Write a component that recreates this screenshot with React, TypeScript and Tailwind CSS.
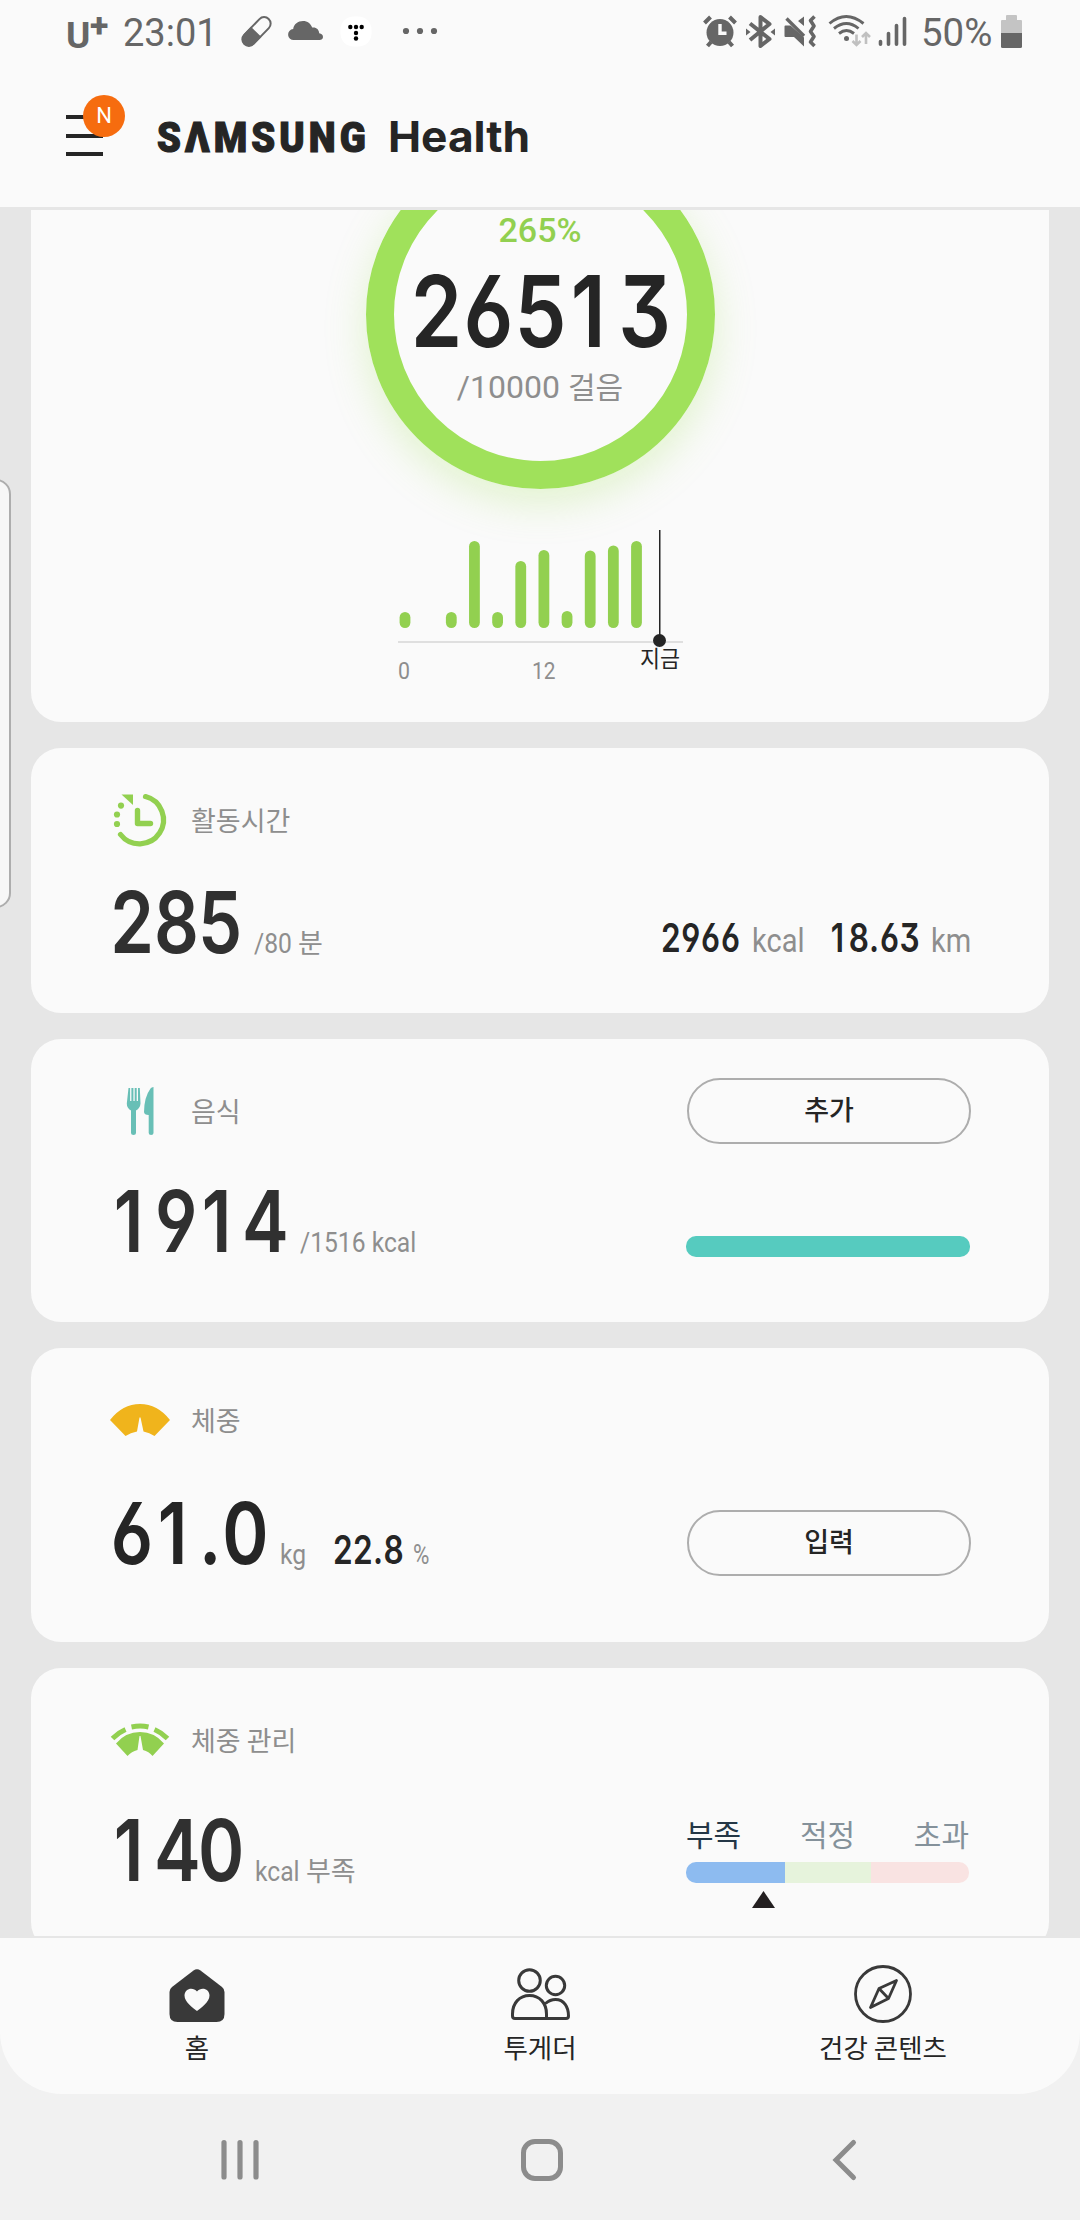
import React from "react";

const KR = "font-['Noto_Sans_CJK_KR',sans-serif]";
const RO = "font-['Roboto','Noto_Sans_CJK_KR',sans-serif]";
const NUM = "font-['Inter',sans-serif] [font-feature-settings:'cv03','cv04','cv09']";

/* Horizontally condensed run of text in a box of fixed width. */
function Cond({ box, text, children }: { box: string; text: string; children: React.ReactNode }) {
  return (
    <span className={`block shrink-0 whitespace-nowrap ${box}`}>
      <span className={`inline-block origin-left leading-none ${text}`}>{children}</span>
    </span>
  );
}

/* Number set in equal-width digit cells; the figure 1 sits slightly left in its cell. */
function Digits({ value }: { value: string }) {
  return (
    <>
      {value.split("").map((c, i) => (
        <span
          key={i}
          className={
            c === "."
              ? "inline-block w-[0.345em] text-center"
              : c === "1"
                ? "inline-block w-[0.628em] pr-[0.1em] text-center"
                : "inline-block w-[0.628em] text-center"
          }
        >
          {c}
        </span>
      ))}
    </>
  );
}

function StatusBar() {
  return (
    <div className="flex h-[52px] items-start pt-3 text-[#666666]">
      <span className={`relative ml-[66px] block h-10 w-[49px] leading-none ${RO}`}>
        <span className="block pt-[5px] text-[37px] leading-none font-bold">U</span>
        <span className="absolute -top-[4px] left-[24px] text-[34px] leading-none font-extrabold">+</span>
      </span>
      <Cond box="ml-[8px] w-[113px] pt-[2px]" text={`${RO} text-[39px] scale-x-[0.975]`}>23:01</Cond>
      <svg className="h-10 w-10" viewBox="236 12 40 40" fill="none">
        <g transform="rotate(-46 256.5 31.5)">
          <rect x="239" y="25" width="35" height="13" rx="6.5" stroke="currentColor" strokeWidth="2" />
          <path d="M256 24.200h-10a7.300 7.300 0 0 0 0 14.600h10z" fill="currentColor" />
        </g>
      </svg>
      <svg className="ml-[8px] h-10 w-10" viewBox="284 12 40 40" fill="currentColor">
        <path d="M294 40a5.500 5.500 0 0 1-.8-11c.6-5 4.800-8 9.800-8 4.500 0 7.800 2.600 9.200 6.600 4-.6 6.800 2 7 5.600 2.400.4 3.800 1.600 3.800 3.800 0 2-1.500 3-3.500 3z" />
      </svg>
      <svg className="ml-[12px] h-10 w-10" viewBox="336 12 40 40">
        <rect x="340.500" y="16.500" width="31" height="30" rx="13" fill="#fff" />
        <g fill="#000">
          <circle cx="350.300" cy="27" r="2.200" />
          <circle cx="356" cy="27" r="2.200" />
          <circle cx="361.700" cy="27" r="2.200" />
          <circle cx="356" cy="33" r="2.200" />
          <circle cx="356" cy="38.500" r="2.200" />
        </g>
      </svg>
      <svg className="ml-[24px] h-10 w-10" viewBox="400 12 40 40" fill="currentColor">
        <circle cx="406" cy="31" r="3.100" />
        <circle cx="420" cy="31" r="3.100" />
        <circle cx="434" cy="31" r="3.100" />
      </svg>
      <svg className="ml-[260px] h-10 w-10" viewBox="700 12 40 40" fill="none" stroke="currentColor">
        <circle cx="720" cy="32.500" r="13.500" fill="currentColor" stroke="none" />
        <path d="M720 24v9.200h6.500" stroke="#fafafa" strokeWidth="3.400" />
        <path d="M704.500 23l6-6M735.500 23l-6-6" strokeWidth="4" />
        <path d="M711 42l-3.500 4M729 42l3.500 4" strokeWidth="4" />
      </svg>
      <svg className="ml-[2px] h-10 w-[36px]" viewBox="742 12 36 40" fill="none" stroke="currentColor">
        <path d="M750 23.500l19.500 15.500-9 7V17l9 7L750 40" strokeWidth="4" strokeLinejoin="round" />
        <path d="M746 28.500v7l4.500-3.500zM775 28.500v7l-4.500-3.500z" fill="currentColor" stroke="none" />
      </svg>
      <svg className="ml-[4px] h-10 w-10" viewBox="782 12 40 40" fill="none" stroke="currentColor">
        <path d="M785.500 25.500h5l13.500 12V46.500l-10-9.500h-8.500q-1 0-1-1V26.500q0-1 1-1zM804 16.500v9.500l-6-5z" fill="currentColor" stroke="none" />
        <path d="M786.500 18.500L804 36" strokeWidth="3.400" />
        <path d="M814.500 16.500l-4 4 3.500 5.500-3.500 5.500 3.500 5-3.500 5.500 4 4" strokeWidth="3.600" strokeLinejoin="round" />
      </svg>
      <svg className="ml-[5px] h-10 w-[45px]" viewBox="827 12 45 40" fill="none" stroke="currentColor">
        <path d="M829.500 23.500q16.500-14 34 0M834 28.500q12.500-10 24.500 0M839 33.500q7.500-6 15 0" strokeWidth="2.900" />
        <circle cx="846.500" cy="38.500" r="2.500" fill="currentColor" stroke="none" />
        <path d="M856.500 34.500v9.500M852.500 41l4 4 4-4M866 44v-10M862 37l4-4 4 4" stroke="#c0c0c0" strokeWidth="2.600" />
      </svg>
      <svg className="ml-[4px] h-10 w-[34px]" viewBox="876 12 34 40" fill="none" stroke="currentColor" strokeWidth="3.600" strokeLinecap="round">
        <path d="M880.500 41.500v2.700M888.500 33.500v10.700M896.500 25.500v18.700M904.500 18.500v25.700" />
      </svg>
      <Cond box="ml-[11px] w-[76px] pt-[2px]" text={`${RO} text-[39px] scale-x-[0.985]`}>50%</Cond>
      <svg className="h-10 w-[30px]" viewBox="997 12 30 40">
        <path d="M1006 16q0-1 1-1h9q1 0 1 1v4h4q1 0 1 1v12h-21V21q0-1 1-1h4z" fill="#c4c4c4" />
        <path d="M1001 33h21v13.500q0 1.500-1.500 1.500h-18q-1.500 0-1.500-1.500z" fill="currentColor" />
      </svg>
    </div>
  );
}

function Header() {
  return (
    <header className="h-[210px] border-b-[3px] border-[#e6e6e6] bg-[#fafafa]">
      <StatusBar />
      <div className="flex h-[120px] items-start pt-[63px] text-[#252525]">
        <div className="relative ml-[66px] w-[37px]">
          <div className="flex flex-col gap-[14.500px]">
            <span className="h-1 w-[37px] bg-[#252525]" />
            <span className="h-1 w-[37px] bg-[#252525]" />
            <span className="h-1 w-[37px] bg-[#252525]" />
          </div>
          <span className={`absolute -top-[20.500px] left-[17px] flex size-[42px] items-center justify-center rounded-full bg-[#f66c0f] text-[22px] leading-none text-white ${RO}`}>
            N
          </span>
        </div>
        <div className="flex items-baseline">
          <Cond
            box="ml-[54px] w-[231px]"
            text="font-['Roboto',sans-serif] text-[42px] font-black tracking-[4.500px] scale-x-[0.91] [-webkit-text-stroke:1.2px_#252525]"
          >
            <span aria-label="SAMSUNG">SΛMSUNG</span>
          </Cond>
          <Cond box="w-[155px]" text="font-['Inter',sans-serif] text-[43px] font-bold scale-x-[1.03]">
            Health
          </Cond>
        </div>
      </div>
    </header>
  );
}

/* [slot, height] of each two-hour column. */
const BARS: [number, number][] = [
  [0, 16], [2, 16], [3, 87], [4, 16], [5, 67], [6, 78], [7, 17], [8, 77.5], [9, 82.5], [10, 87],
];

function StepsCard() {
  return (
    <section className="flex h-[512px] shrink-0 flex-col items-center overflow-hidden rounded-b-[30px] bg-[#fafafa]">
      <div className="-mt-[70px] flex size-[349px] shrink-0 flex-col items-center rounded-full border-[28px] border-[#a0e15b] pt-[45px] leading-none shadow-[0_14px_40px_rgba(160,225,91,0.28)]">
        <span className={`text-[34px] font-medium leading-none text-[#92d050] ${RO}`}>265%</span>
        <span className={`mt-[15px] inline-block scale-x-[0.835] text-[99px] leading-none font-semibold whitespace-nowrap text-[#252525] ${NUM}`}>
          <Digits value="26513" />
        </span>
        <span className={`mt-[10px] whitespace-nowrap text-[32px] leading-none text-[#8e8e8e] ${RO}`}>
          /10000 <span className="text-[30px]">걸음</span>
        </span>
      </div>
      <svg className="mt-[36px] h-[165px] w-[300px] shrink-0" viewBox="390 525 300 165">
        <rect x="398" y="641" width="285" height="2" fill="#dfdfdf" />
        {BARS.map(([slot, h]) => (
          <rect key={slot} x={399.6 + slot * 23.15} y={628 - h} width="10.800" height={h} rx="5.400" fill="#92d050" />
        ))}
        <rect x="659" y="530" width="1.500" height="105" fill="#252525" />
        <circle cx="659.500" cy="640.500" r="6.500" fill="#252525" />
        <g fontFamily="Roboto" fontSize="24" fill="#8e8e8e">
          <text x="398" y="679" textLength="12" lengthAdjust="spacingAndGlyphs">0</text>
          <text x="532" y="679" textLength="23.500" lengthAdjust="spacingAndGlyphs">12</text>
        </g>
        <text x="640" y="666.500" fontFamily="Noto Sans CJK KR" fontSize="23" fill="#252525" textLength="40" lengthAdjust="spacingAndGlyphs">
          지금
        </text>
      </svg>
    </section>
  );
}

function Card({
  height, icon, label, children, right,
}: {
  height: string; icon: React.ReactNode; label: string; children: React.ReactNode; right: React.ReactNode;
}) {
  return (
    <section className={`flex shrink-0 justify-between rounded-[30px] bg-[#fafafa] pl-[79px] ${height}`}>
      <div className="flex flex-col pt-[42px]">
        <div className="flex h-[60px] items-center gap-[21px]">
          <svg className="size-[60px]" viewBox="0 0 60 60">{icon}</svg>
          <span className={`-mt-[2px] text-[27px] leading-none text-[#8e8e8e] ${KR}`}>{label}</span>
        </div>
        {children}
      </div>
      {right}
    </section>
  );
}

const big = `${NUM} text-[85px] font-semibold scale-x-[0.825]`;
const mid = `${NUM} text-[39px] font-semibold scale-x-[0.81] text-[#252525]`;
const unit = `${RO} text-[28px] text-[#8e8e8e] scale-x-[0.88]`;
const unitKr = `${KR} text-[27px] text-[#8e8e8e]`;

function ActionButton({ children }: { children: React.ReactNode }) {
  return (
    <button className={`flex h-[66px] w-[284px] items-center justify-center rounded-full border-2 border-[#adadad] pb-[5px] text-[27px] leading-none font-medium text-[#252525] ${KR}`}>
      {children}
    </button>
  );
}

function ActivityCard() {
  return (
    <Card
      height="h-[265px]"
      label="활동시간"
      icon={
        <g fill="none" stroke="#92d050">
          <path d="M35.500 6.600A24 24 0 1 1 10.500 44.500" strokeWidth="5.200" strokeLinecap="round" />
          <path d="M27.500 20.500v13h13" strokeWidth="5.400" strokeLinecap="round" strokeLinejoin="round" />
          <path d="M11.500 4.500h11.500v10.500z" fill="#92d050" stroke="none" />
          <g fill="#92d050" stroke="none">
            <circle cx="11" cy="15.600" r="3.100" />
            <circle cx="7" cy="24.500" r="3.100" />
            <circle cx="7" cy="34" r="3.100" />
          </g>
        </g>
      }
      right={
        <div className="mr-[72px] flex items-baseline pt-[170px]">
          <Cond box="w-[91px]" text={mid}><Digits value="2966" /></Cond>
          <Cond box="w-[77px]" text={`${RO} text-[33px] text-[#8e8e8e] scale-x-[0.88]`}>kcal</Cond>
          <Cond box="w-[102px]" text={mid}><Digits value="18.63" /></Cond>
          <Cond box="w-[46px]" text={`${RO} text-[33px] text-[#8e8e8e] scale-x-[0.88]`}>km</Cond>
        </div>
      }
    >
      <div className="mt-[30px] flex items-baseline text-[#303030]">
        <Cond box="w-[144px]" text={big}><Digits value="285" /></Cond>
        <Cond box="w-[44px]" text={unit}>/80</Cond>
        <Cond box="w-[40px]" text={unitKr}>분</Cond>
      </div>
    </Card>
  );
}

function FoodCard() {
  return (
    <Card
      height="h-[283px]"
      label="음식"
      icon={
        <g fill="#68bfb6">
          <path d="M18.500 7h1.600v13h1.300V7h2v13h1.300V7h2v13h1.300V7h1.800l.7 15.500q-.3 4.500-4.500 7v22.500q0 2-2.500 2t-2.500-2V29.500q-4.200-2.500-4.200-7z" />
          <path d="M43.500 6v46q0 2-2.400 2t-2.400-2V34q-4.500 0-4.700-3 .2-15 6.500-23.500 1-1.500 3-1.500z" />
        </g>
      }
      right={
        <div className="mr-[78px] pt-[39px]">
          <ActionButton>추가</ActionButton>
          <div className="mt-[92px] -ml-px h-[21px] w-[284px] rounded-[10px] bg-[#56cbbf]" />
        </div>
      }
    >
      <div className="mt-[38px] flex items-baseline text-[#303030]">
        <Cond box="w-[190px]" text={big}><Digits value="1914" /></Cond>
        <Cond box="w-[130px]" text={unit}>/1516 kcal</Cond>
      </div>
    </Card>
  );
}

function WeightCard() {
  return (
    <Card
      height="h-[294px]"
      label="체중"
      icon={
        <path d="M0 30Q12.500 14 30 14T60 30L44.500 46q-5-3.500-11-4.500L30.500 27.500h-1L27 41.500q-6.500 1-11.500 4.500z" fill="#f0b41c" />
      }
      right={
        <div className="mr-[78px] pt-[162px]">
          <ActionButton>입력</ActionButton>
        </div>
      }
    >
      <div className="mt-[41px] flex items-baseline text-[#252525]">
        <Cond box="w-[170px]" text={big}><Digits value="61.0" /></Cond>
        <Cond box="w-[53px]" text={unit}>kg</Cond>
        <Cond box="w-[80px]" text={mid}><Digits value="22.8" /></Cond>
        <Cond box="w-[30px]" text={`${RO} text-[28px] text-[#8e8e8e] scale-x-[0.8]`}>%</Cond>
      </div>
    </Card>
  );
}

function ManageCard() {
  return (
    <Card
      height="h-[284px]"
      label="체중 관리"
      icon={
        <g>
          <path d="M6 33.500Q15.500 22 30 22T54 33.500L42.500 46q-3.500-4.500-9.500-6L30.500 26h-1L27.500 40q-6 1.500-10 6z" fill="#92d050" />
          <path d="M2.500 28.500Q8.500 22.500 15.500 19.500M21.500 17q9-1.800 17 0M44.500 19.500Q51.500 22.500 57.500 28.500" fill="none" stroke="#92d050" strokeWidth="5" />
        </g>
      }
      right={
        <div className="mr-20 w-[283px] pt-[150px]">
          <div className={`flex justify-between text-[30px] leading-none text-[#84919a] ${KR}`}>
            <span className="text-[#243746]">부족</span>
            <span>적정</span>
            <span>초과</span>
          </div>
          <div className="mt-[14px] flex h-[21px] overflow-hidden rounded-[10px]">
            <span className="w-[98.500px] bg-[#8dbbf0]" />
            <span className="w-[86.500px] bg-[#e6f3dc]" />
            <span className="flex-1 bg-[#f9e3e2]" />
          </div>
          <svg className="mt-2 ml-[66px] h-[17px] w-[23px]" viewBox="0 0 23 17">
            <path d="M11.500 0L23 17H0z" fill="#231f20" />
          </svg>
        </div>
      }
    >
      <div className="mt-[38px] flex items-baseline text-[#303030]">
        <Cond box="w-[145px]" text={big}><Digits value="140" /></Cond>
        <Cond box="w-[51px]" text={unit}>kcal</Cond>
        <Cond box="w-[60px]" text={unitKr}>부족</Cond>
      </div>
    </Card>
  );
}

function Tab({ label, icon }: { label: string; icon: React.ReactNode }) {
  return (
    <div className="flex w-[200px] flex-col items-center pt-[22px]">
      <svg className="size-[68px]" viewBox="-34 -34 68 68">{icon}</svg>
      <span className={`mt-[6px] text-[26.500px] leading-none whitespace-nowrap text-[#252525] ${KR}`}>{label}</span>
    </div>
  );
}

function TabBar() {
  return (
    <nav className="flex h-[156px] gap-[143px] rounded-b-[62px] bg-[#fafafa] pl-[97px]">
      <Tab
        label="홈"
        icon={
          <g>
            <path d="M-3.500-23.500q3.500-2.500 7 0L25-7q2.500 2 2.500 5V20q0 8-8 8h-39q-8 0-8-8V-2q0-3 2.500-5z" fill="#393939" />
            <path d="M0 17C-4 14-12.500 8-12.500 1.500-12.500-5.500-4-7.500 0-2.500 4-7.500 12.500-5.500 12.500 1.500 12.500 8 4 14 0 17z" fill="#fafafa" />
          </g>
        }
      />
      <Tab
        label="투게더"
        icon={
          <g fill="none" stroke="#393939" strokeWidth="3">
            <ellipse cx="-10.500" cy="-13.500" rx="10.800" ry="10.800" />
            <ellipse cx="15.500" cy="-8.500" rx="9.200" ry="9.200" />
            <path d="M-27.500 20C-27.500 9-20.500 1.500-10.500 1.500S6.500 9 6.500 20V24.500H-25q-2.500 0-2.500-2.500zM5.500 9.500Q10 5.500 15.500 5.500C24 5.500 28.500 13 28.500 22q0 2.500-2.500 2.500H6" strokeLinejoin="round" />
          </g>
        }
      />
      <Tab
        label="건강 콘텐츠"
        icon={
          <g fill="none" stroke="#393939" strokeWidth="2.800" strokeLinejoin="round">
            <circle r="27.500" />
            <path d="M13.500-13.500L-4-5.500-12.500 13.500 5.500 4.500zM-4-5.500L5.500 4.500" />
          </g>
        }
      />
    </nav>
  );
}

function SystemNav() {
  return (
    <div className="flex h-[126px] items-start pt-[40px]">
      <svg className="ml-[215px] h-[52px] w-[50px]" viewBox="215 2134 50 52" stroke="#8c8c8c" strokeWidth="5.200" strokeLinecap="round">
        <path d="M224 2142.500v34.500M240 2142.500v34.500M256 2142.500v34.500" />
      </svg>
      <svg className="ml-[252px] h-[52px] w-[50px]" viewBox="517 2134 50 52" fill="none" stroke="#8c8c8c" strokeWidth="5">
        <rect x="523.500" y="2141.500" width="37" height="37" rx="11.500" />
      </svg>
      <svg className="ml-[258px] h-[52px] w-[40px]" viewBox="825 2134 40 52" fill="none" stroke="#8c8c8c" strokeWidth="5" strokeLinecap="round">
        <path d="M853.500 2142.500L836 2160l17.500 17.500" />
      </svg>
    </div>
  );
}

export default function App() {
  return (
    <div className="relative h-[2220px] w-[1080px] overflow-hidden bg-[#f1f1f1]">
      <Header />
      <main className="flex h-[1728px] flex-col gap-[26px] overflow-hidden border-b-2 border-[#e6e6e6] bg-[#e6e6e6] pr-[31px] pl-[31px]">
        <StepsCard />
        <ActivityCard />
        <FoodCard />
        <WeightCard />
        <ManageCard />
      </main>
      <TabBar />
      <SystemNav />
      <div className="absolute top-[479px] -left-5 h-[429px] w-[31px] rounded-r-[15px] border-2 border-[#adadad] bg-[#f7f7f7]" />
    </div>
  );
}
